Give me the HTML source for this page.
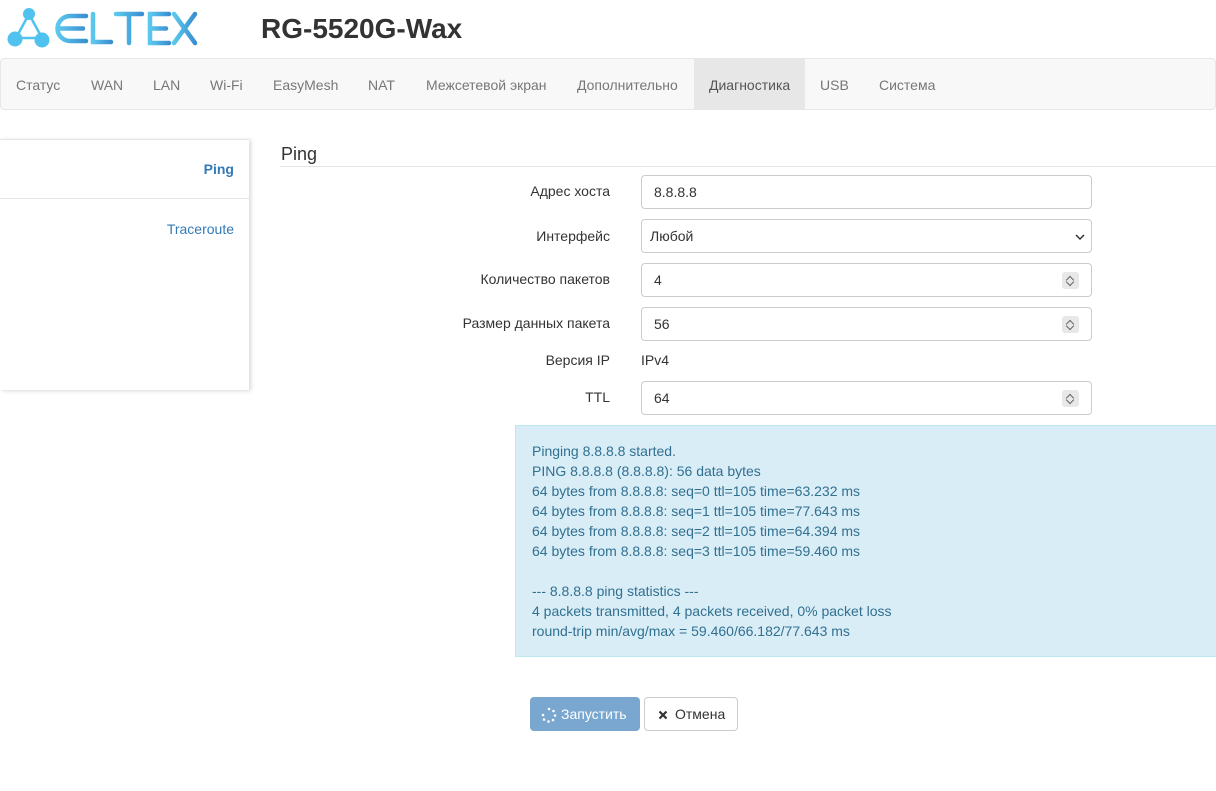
<!DOCTYPE html>
<html><head><meta charset="utf-8"><style>
body{margin:0;width:1216px;height:791px;overflow:hidden;background:#fff;font-family:"Liberation Sans",sans-serif;font-size:14px;color:#333;position:relative}
.abs{position:absolute}
.nav{left:0;top:58px;width:1214px;height:50px;background:#f8f8f8;border:1px solid #e7e7e7;border-radius:4px}
.nav span{position:absolute;top:0;height:50px;line-height:52px;color:#777;padding:0 15px}
.side{left:0;top:139px;width:249px;height:251px;box-shadow:2px 1px 4px rgba(0,0,0,.15);background:#fff}
.lbl{right:606px;text-align:right;font-size:14px}
.inp{left:641px;border:1px solid #ccc;border-radius:4px;background:#fff;line-height:32px;padding-left:12px;box-sizing:border-box;width:451px;height:34px}
.spin{position:absolute;right:12px;top:8px;width:17px;height:17px;background:#e8e8e8;border-radius:3px}
.spin:before,.spin:after{content:"";position:absolute;left:5px;width:5px;height:5px;border-left:1.2px solid #666;border-top:1.2px solid #666}
.spin:before{top:5px;transform:rotate(45deg)}
.spin:after{top:7px;transform:rotate(225deg)}
.alert{left:515px;top:425px;width:710px;height:232px;background:#d9edf7;border:1px solid #bce8f1;color:#31708f;box-sizing:border-box;padding:15px 16px;line-height:20px}
</style></head><body>
<svg class="abs" style="left:0;top:0" width="210" height="58" viewBox="0 0 210 58">
<defs><linearGradient id="g" x1="0" x2="1"><stop offset="0" stop-color="#5cc8ee"/><stop offset="1" stop-color="#3a8fd0"/></linearGradient></defs>
<g stroke="#4fc3ee" stroke-width="2.5"><line x1="29" y1="14" x2="16" y2="38"/><line x1="29" y1="14" x2="42" y2="38"/><line x1="16" y1="38" x2="42" y2="38"/></g>
<circle cx="29" cy="14" r="6" fill="#4fc3ee"/><circle cx="15" cy="39" r="7.5" fill="#4fc3ee"/><circle cx="42" cy="40" r="7.5" fill="#4fc3ee"/>
<g fill="none" stroke="url(#g)" stroke-width="4.5" stroke-linecap="round">
<path d="M86 16 H70 a12.5 12.5 0 0 0 0 25 H86 M60 28.5 H83"/>
<path d="M93 14 V42 H111"/>
<path d="M116 14 H142 M129 14 V43"/>
<path d="M169 14 H150 V43 H169 M150 28.5 H166"/>
<path d="M174 14 L195 43 M195 14 L174 43"/>
</g></svg>
<div class="abs" style="left:261px;top:13px;font-size:28px;font-weight:bold;color:#333">RG-5520G-Wax</div>
<div class="abs nav">
<span style="left:0">Статус</span><span style="left:75px">WAN</span><span style="left:137px">LAN</span><span style="left:194px">Wi-Fi</span><span style="left:257px">EasyMesh</span><span style="left:352px">NAT</span><span style="left:410px">Межсетевой экран</span><span style="left:561px">Дополнительно</span><span style="left:693px;background:#e7e7e7;color:#555;width:81px">Диагностика</span><span style="left:804px">USB</span><span style="left:863px">Система</span>
</div>
<div class="abs side">
<div style="border-top:1px solid #e5e5e5;height:58px;border-bottom:1px solid #e5e5e5;text-align:right;padding-right:15px;line-height:58px;color:#337ab7;font-weight:bold">Ping</div>
<div style="text-align:right;padding-right:15px;line-height:60px;color:#337ab7">Traceroute</div>
</div>
<div class="abs" style="left:281px;top:144px;font-size:18px;color:#333">Ping</div>
<div class="abs" style="left:280px;top:166px;width:936px;border-top:1px solid #e5e5e5"></div>
<div class="abs lbl" style="top:183px">Адрес хоста</div><div class="abs inp" style="top:175px">8.8.8.8</div>
<div class="abs lbl" style="top:228px">Интерфейс</div><div class="abs inp" style="top:219px;padding-left:8px">Любой<svg style="position:absolute;right:6px;top:13px" width="10" height="8"><path d="M1 2 L5 6 L9 2" fill="none" stroke="#333" stroke-width="1.5"/></svg></div>
<div class="abs lbl" style="top:271px">Количество пакетов</div><div class="abs inp" style="top:263px">4<i class="spin"></i></div>
<div class="abs lbl" style="top:315px">Размер данных пакета</div><div class="abs inp" style="top:307px">56<i class="spin"></i></div>
<div class="abs lbl" style="top:352px">Версия IP</div><div class="abs" style="left:641px;top:352px">IPv4</div>
<div class="abs lbl" style="top:389px">TTL</div><div class="abs inp" style="top:381px">64<i class="spin"></i></div>
<div class="abs alert">Pinging 8.8.8.8 started.<br>PING 8.8.8.8 (8.8.8.8): 56 data bytes<br>64 bytes from 8.8.8.8: seq=0 ttl=105 time=63.232 ms<br>64 bytes from 8.8.8.8: seq=1 ttl=105 time=77.643 ms<br>64 bytes from 8.8.8.8: seq=2 ttl=105 time=64.394 ms<br>64 bytes from 8.8.8.8: seq=3 ttl=105 time=59.460 ms<br><br>--- 8.8.8.8 ping statistics ---<br>4 packets transmitted, 4 packets received, 0% packet loss<br>round-trip min/avg/max = 59.460/66.182/77.643 ms</div>
<div class="abs" style="left:530px;top:697px;width:110px;height:34px;background:#7aa7d0;border-radius:4px;color:#fff;line-height:34px;box-sizing:border-box;padding-left:31px">Запустить</div>
<svg class="abs" style="left:541px;top:707px" width="16" height="16"><g fill="#fff"><circle cx="8" cy="2" r="1.3"/><circle cx="12.5" cy="4" r="1.3"/><circle cx="14" cy="8.5" r="1.3"/><circle cx="12" cy="13" r="1.3"/><circle cx="7.5" cy="14.5" r="1.3"/><circle cx="3" cy="12.5" r="1.3"/><circle cx="2" cy="8" r="1.3"/></g></svg>
<div class="abs" style="left:644px;top:697px;width:94px;height:34px;border:1px solid #ccc;border-radius:4px;box-sizing:border-box;line-height:32px;padding-left:30px;color:#333">Отмена</div>
<svg class="abs" style="left:658px;top:710px" width="10" height="10"><path d="M1.5 1.5 L8.5 8.5 M8.5 1.5 L1.5 8.5" stroke="#333" stroke-width="2.2"/></svg>
</body></html>
